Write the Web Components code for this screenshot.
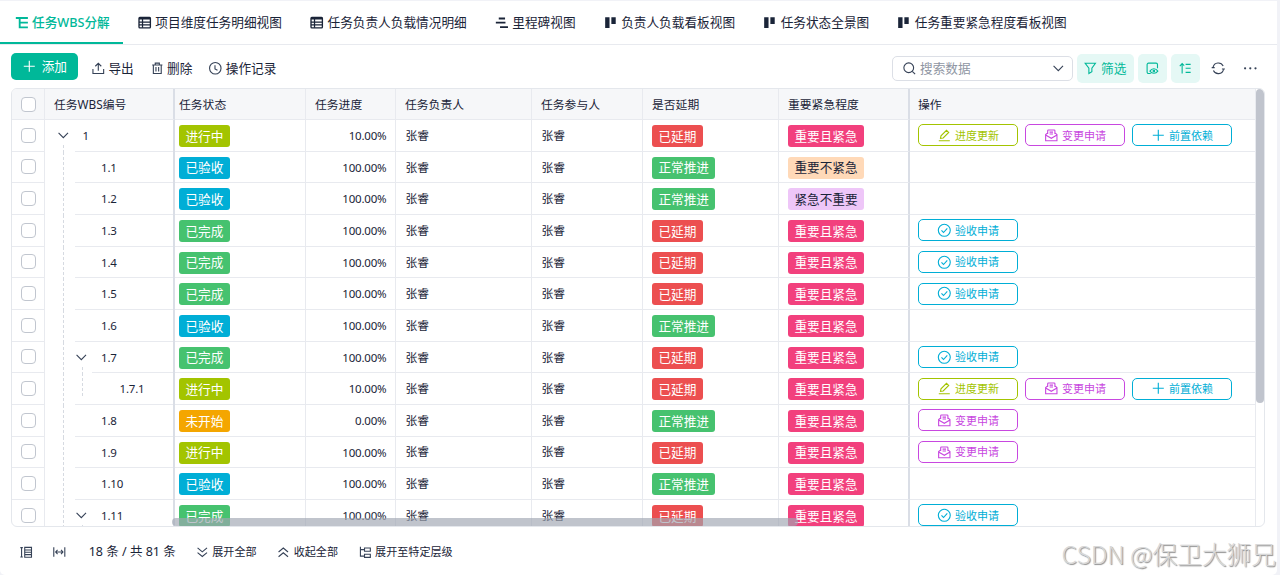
<!DOCTYPE html>
<html lang="zh-CN">
<head>
<meta charset="utf-8">
<title>任务WBS分解</title>
<style>
    html, body {
        margin: 0;
        height: 100%;
        overflow: hidden;
    }
    body {
        background: #f1f2f7;
        color: #1a2438;
        font-family: 'Noto Sans', 'Noto Sans CJK SC', sans-serif;
        font-size: 12.67px;
        line-height: 1;
    }
</style>
</head>
<body>
<task-app></task-app>

<script>
// stroke icons on a 16x16 grid
const icons = {
    tree: '<path d="M1 2.4h14.4M5.6 2.4v11.2h9.8M5.6 8h9.8" stroke-width="2.2"/>',
    grid: '<rect x="1.2" y="1.8" width="13.6" height="12.4" rx="1" stroke-width="1.6"/><path d="M1.2 3h13.6" stroke-width="2.4"/><path d="M1.2 7.2h13.6M1.2 10.7h13.6M5.4 3v11" stroke-width="1.5"/>',
    gantt: '<path d="M4.5 3h7.5M1 8h7.5M7.5 8h5M6 13.2h9.5" stroke-width="2.2"/>',
    board: '<path d="M1.4 1.6h5.2v12.6H1.4zM8.8 1.6H14v8H8.8z" fill="currentColor" stroke="none"/>',
    plus: '<path d="M8 1v14M1 8h14"/>',
    upload: '<path d="M1.2 9v5.6h13.6V9M8 11V1.8M4.2 5.4 8 1.6l3.8 3.8"/>',
    trash: '<path d="M1.5 3.8h13M5.4 3.8V1.4h5.2v2.4M3 3.8v10.8h10V3.8M6.3 6.5v5.6M9.7 6.5v5.6"/>',
    clock: '<circle cx="8" cy="8" r="7.3"/><path d="M7.6 4v4.8l3.2 1.6"/>',
    search: '<circle cx="7.3" cy="7.3" r="6.2"/><path d="m11.8 11.8 3.6 3.6"/>',
    down: '<path d="m2 5 6 6 6-6"/>',
    filter: '<path d="M1.5 1.6h13L10 7.8v4.6l-3.8 2.2V7.8z"/>',
    view: '<path d="M6 14.6H3.2a1.8 1.8 0 0 1-1.8-1.8V3.2a1.8 1.8 0 0 1 1.8-1.8h9.6a1.8 1.8 0 0 1 1.8 1.8V8"/><path d="M5 11.6c2.4-4 7.6-4 10 0-2.4 3.6-7.6 3.6-10 0z"/><circle cx="10" cy="11.4" r="1"/>',
    sort: '<path d="M4 14.5V2M1 5.2 4 2l2.6 2.6M8.4 3h6.4M8.4 8h6.4M8.4 13.2h6.4"/>',
    refresh: '<path d="M1.4 6.4A6.8 6.8 0 0 1 14.2 5.2M14.6 9.6A6.8 6.8 0 0 1 1.8 10.8M-.4 7.2h3.8M12.6 8.8h3.8"/>',
    more: '<g fill="currentColor" stroke="none"><circle cx="1.4" cy="8" r="1.4"/><circle cx="8" cy="8" r="1.4"/><circle cx="14.6" cy="8" r="1.4"/></g>',
    pen: '<path d="M1 15h14M3.2 12l.6-3.4 7-7 2.8 2.8-7 7z"/>',
    mail: '<path d="M3.4 6.2V2.2a1 1 0 0 1 1-1h7.2a1 1 0 0 1 1 1v4M5.8 4h4.4M5.8 6.4h4.4M3.4 5 .8 7v8h14.4V7l-2.6-2M.8 7.6l7.2 4.2 7.2-4.2"/>',
    check: '<circle cx="8" cy="8" r="7.6"/><path d="m4.4 8.2 2.6 2.6 4.8-5.2"/>',
    rows: '<path d="M.4 2h3.2M.4 14h3.2M2 2v12M6 1.8h8.6v12.4H6zM6 5h8.6M6 8h8.6M6 11h8.6"/>',
    fit: '<path d="M1 1.6v12M15 1.6v12M3.4 7.6h9.2M5.8 5 3.4 7.6l2.4 2.6M10.2 5l2.4 2.6-2.4 2.6"/>',
    expand: '<path d="m2 2.4 6 5 6-5M2 8.4l6 5 6-5"/>',
    collapse: '<path d="m2 7.6 6-5 6 5M2 13.6l6-5 6 5"/>',
    level: '<path d="M1.8 1v11.8h5M1.8 4.6h5M7 2.6h7.4v4H7zM7 10.4h7.4v4H7z"/>',
};

const sheet = `
<style>
    * { box-sizing: border-box; }
</style>
`;

class UiIcon extends HTMLElement {
    connectedCallback() {
        const root = this.attachShadow({ mode: 'open' });
        root.innerHTML = `
            <style>
                :host { display: inline-block; flex: none; width: 12.6px; height: 12.6px; }
                svg { display: block; width: 100%; height: 100%; overflow: visible; }
            </style>
            <svg viewBox="0 0 16 16" fill="none" stroke="currentColor" stroke-width="1.4">${icons[this.getAttribute('name')]}</svg>
        `;
    }
}

class ViewTab extends HTMLElement {
    connectedCallback() {
        const root = this.attachShadow({ mode: 'open' });
        root.innerHTML = `${sheet}
            <style>
                :host {
                    display: flex;
                    align-items: center;
                    gap: 4.1px;
                    height: 43px;
                    padding: 2px 13.6px 0 14.5px;
                    box-sizing: border-box;
                    white-space: nowrap;
                    border-bottom: 2px solid transparent;
                }
                :host([active]) { color: #00b899; border-color: #00b899; font-weight: 500; }
                ui-icon { width: 13.4px; height: 13.4px; }
            </style>
            <ui-icon name="${this.getAttribute('icon')}"></ui-icon><slot></slot>
        `;
    }
}

class ToolButton extends HTMLElement {
    connectedCallback() {
        const root = this.attachShadow({ mode: 'open' });
        root.innerHTML = `${sheet}
            <style>
                :host {
                    display: flex;
                    align-items: center;
                    justify-content: center;
                    gap: 4px;
                    box-sizing: border-box;
                    white-space: nowrap;
                }
                :host([kind=primary]) {
                    width: 67px;
                    height: 27px;
                    gap: 6px;
                    padding-left: 1px;
                    border-radius: 5px;
                    background: #00b899;
                    color: #fff;
                }
                :host([kind=soft]) {
                    min-width: 29px;
                    height: 29px;
                    padding: 0 7.5px;
                    border-radius: 5px;
                    background: #e5f8f5;
                    color: #00b899;
                }
                :host(:not([kind])) ui-icon { color: #364257; }
            </style>
            <ui-icon name="${this.getAttribute('icon')}"></ui-icon><slot></slot>
        `;
    }
}

class SearchBox extends HTMLElement {
    connectedCallback() {
        const root = this.attachShadow({ mode: 'open' });
        root.innerHTML = `
            <style>
                :host {
                    display: flex;
                    align-items: center;
                    box-sizing: border-box;
                    width: 181px;
                    height: 25px;
                    padding: 0 7px 0 10px;
                    border: 1px solid #dcdfe6;
                    border-radius: 5px;
                    color: #364257;
                }
                span { flex: 1; margin: 1px 0 0 4.5px; color: #8f96a3; }
            </style>
            <ui-icon name="search"></ui-icon><span><slot></slot></span><ui-icon name="down"></ui-icon>
        `;
    }
}

class StatusTag extends HTMLElement {
    connectedCallback() {
        const root = this.attachShadow({ mode: 'open' });
        root.innerHTML = `
            <style>
                :host {
                    display: flex;
                    align-items: center;
                    box-sizing: border-box;
                    height: 22px;
                    margin-top: 1.6px;
                    padding: 0 6.4px;
                    border-radius: 3px;
                    font-size: 12.67px;
                    color: #fff;
                    white-space: nowrap;
                }
                :host([tone=lime]) { background: #a3c400; }
                :host([tone=cyan]) { background: #00aed6; }
                :host([tone=green]) { background: #46c26f; }
                :host([tone=orange]) { background: #f4a600; }
                :host([tone=red]) { background: #ec4f50; }
                :host([tone=pink]) { background: #f2407d; }
                :host([tone=peach]) { background: #ffd9b8; color: #1a2438; }
                :host([tone=lilac]) { background: #eec6f8; color: #1a2438; }
            </style>
            <slot></slot>
        `;
    }
}

class RowAction extends HTMLElement {
    connectedCallback() {
        const root = this.attachShadow({ mode: 'open' });
        root.innerHTML = `
            <style>
                :host {
                    display: flex;
                    align-items: center;
                    justify-content: center;
                    gap: 4.5px;
                    box-sizing: border-box;
                    width: 100px;
                    height: 22px;
                    padding-left: 1px;
                    border: 1px solid;
                    border-radius: 5px;
                    font-size: 11px;
                }
            </style>
            <ui-icon name="${this.getAttribute('icon')}"></ui-icon><slot></slot>
        `;
    }
}

class CheckBox extends HTMLElement {
    connectedCallback() {
        const root = this.attachShadow({ mode: 'open' });
        root.innerHTML = `
            <style>
                :host {
                    display: block;
                    box-sizing: border-box;
                    width: 15px;
                    height: 15px;
                    border: 1px solid #c1c6cf;
                    border-radius: 4px;
                    background: #fff;
                }
            </style>
        `;
    }
}

// column widths shared by the header and the rows
const cells = `
<style>
    :host {
        display: grid;
        grid-template-columns: 33px 130px 131px 90px 136px 111px 136px 131px 346px;
        flex: none;
        font-size: 11.8px;
    }
    .cell {
        display: flex;
        align-items: center;
        min-width: 0;
        padding: 0 9px;
        border-right: 1px solid #e8eaef;
        border-bottom: 1px solid #e8eaef;
        white-space: nowrap;
    }
    .check { justify-content: center; padding: 0; }
    .wbs, .urgency { border-right: 2px solid #dadee6; }
    .status { padding-left: 4px; }
    .ops { gap: 7px; padding-left: 8px; }
</style>
`;

class TableHead extends HTMLElement {
    connectedCallback() {
        const root = this.attachShadow({ mode: 'open' });
        root.innerHTML = `${sheet}${cells}
            <style>
                :host { height: 31px; background: #f6f7f9; }
                .cell:not(.check) { padding-top: 1px; }
            </style>
            <div class="cell check"><check-box></check-box></div>
            <div class="cell wbs">任务WBS编号</div>
            <div class="cell status">任务状态</div>
            <div class="cell">任务进度</div>
            <div class="cell">任务负责人</div>
            <div class="cell">任务参与人</div>
            <div class="cell">是否延期</div>
            <div class="cell urgency">重要紧急程度</div>
            <div class="cell ops">操作</div>
        `;
    }
}

const tones = {
    进行中: 'lime',
    已验收: 'cyan',
    已完成: 'green',
    未开始: 'orange',
    已延期: 'red',
    正常推进: 'green',
    重要且紧急: 'pink',
    重要不紧急: 'peach',
    紧急不重要: 'lilac',
};

const actions = {
    进度更新: ['pen', '#a3c400'],
    变更申请: ['mail', '#c847e0'],
    前置依赖: ['plus', '#00aed6'],
    验收申请: ['check', '#00aed6'],
};

const tag = text => `<status-tag tone="${tones[text]}">${text}</status-tag>`;

const action = text => {
    const [icon, color] = actions[text];
    return `<row-action icon="${icon}" style="color: ${color}">${text}</row-action>`;
};

class TaskRow extends HTMLElement {
    connectedCallback() {
        const { wbs, status, progress, delay, urgency, ops, open, depth, nextDepth } = this.task;
        let guides = '';
        for(let i = 0; i < depth; i++) {
            guides += `<i class="guide ${i > 0 && nextDepth <= i ? 'last' : ''}"></i>`;
        }

        const root = this.attachShadow({ mode: 'open' });
        root.innerHTML = `${sheet}${cells}
            <style>
                :host { height: 31.67px; }
                .wbs {
                    border-bottom: 0;
                    background: linear-gradient(#e8eaef, #e8eaef) no-repeat right bottom / calc(100% - var(--inset)) 1px;
                }
                .guide, .toggle { flex: none; width: 18.5px; height: 100%; }
                .guide, .open {
                    background: repeating-linear-gradient(#d6dae1 0 3px, transparent 3px 5px) no-repeat 9px 0 / 1px 100%;
                }
                .last { background-size: 1px 24px; }
                .open { background-position: 9px 25px; }
                .toggle { display: flex; align-items: center; justify-content: center; color: #364257; }
                .toggle ui-icon { margin-top: -1px; }
                .num, .progress { font-size: 11.5px; letter-spacing: -0.2px; }
                .num { margin-left: 10px; }
                .progress { justify-content: flex-end; padding-right: 8.6px; }
                .progress, .name { padding-top: 1px; }
                .name { padding-left: 9.5px; }
            </style>
            <div class="cell check"><check-box></check-box></div>
            <div class="cell wbs" style="--inset: ${nextDepth > 1 ? 47 : 30}px">
                ${guides}<span class="toggle ${open ? 'open' : ''}">${open ? '<ui-icon name="down"></ui-icon>' : ''}</span>
                <span class="num">${wbs}</span>
            </div>
            <div class="cell status">${tag(status)}</div>
            <div class="cell progress">${progress}</div>
            <div class="cell name">张睿</div>
            <div class="cell name">张睿</div>
            <div class="cell">${tag(delay)}</div>
            <div class="cell urgency">${tag(urgency)}</div>
            <div class="cell ops">${ops.map(action).join('')}</div>
        `;
    }
}

const all = ['进度更新', '变更申请', '前置依赖'];
const tasks = [
    ['1', '进行中', '10.00%', '已延期', '重要且紧急', all, true],
    ['1.1', '已验收', '100.00%', '正常推进', '重要不紧急', []],
    ['1.2', '已验收', '100.00%', '正常推进', '紧急不重要', []],
    ['1.3', '已完成', '100.00%', '已延期', '重要且紧急', ['验收申请']],
    ['1.4', '已完成', '100.00%', '已延期', '重要且紧急', ['验收申请']],
    ['1.5', '已完成', '100.00%', '已延期', '重要且紧急', ['验收申请']],
    ['1.6', '已验收', '100.00%', '正常推进', '重要且紧急', []],
    ['1.7', '已完成', '100.00%', '已延期', '重要且紧急', ['验收申请'], true],
    ['1.7.1', '进行中', '10.00%', '已延期', '重要且紧急', all],
    ['1.8', '未开始', '0.00%', '正常推进', '重要且紧急', ['变更申请']],
    ['1.9', '进行中', '100.00%', '已延期', '重要且紧急', ['变更申请']],
    ['1.10', '已验收', '100.00%', '正常推进', '重要且紧急', []],
    ['1.11', '已完成', '100.00%', '已延期', '重要且紧急', ['验收申请'], true],
];

const depthOf = task => task ? task[0].split('.').length - 1 : 1;

class TaskTable extends HTMLElement {
    connectedCallback() {
        const root = this.attachShadow({ mode: 'open' });
        root.innerHTML = `${sheet}
            <style>
                :host {
                    position: relative;
                    display: flex;
                    box-sizing: border-box;
                    width: 1254px;
                    height: 439px;
                    border: 1px solid #e4e7ec;
                    border-radius: 6px;
                    overflow: hidden;
                }
                .rows { display: flex; flex-direction: column; flex: none; width: 1244px; }
                .vbar { flex: 1; }
                .vbar i { display: block; height: 314px; border-radius: 4px; background: #c0c4cd; }
                .hbar {
                    position: absolute;
                    left: 160px;
                    bottom: 0;
                    width: 626px;
                    height: 8px;
                    border-radius: 4px;
                    background: rgba(160, 165, 177, 0.66);
                }
            </style>
            <div class="rows"><table-head></table-head></div>
            <div class="vbar"><i></i></div>
            <div class="hbar"></div>
        `;

        const rows = root.querySelector('.rows');
        tasks.forEach((item, i) => {
            const [wbs, status, progress, delay, urgency, ops, open] = item;
            const row = document.createElement('task-row');
            row.task = {
                wbs, status, progress, delay, urgency, ops, open,
                depth: depthOf(item),
                nextDepth: depthOf(tasks[i + 1]),
            };
            rows.appendChild(row);
        });
    }
}

class TableFooter extends HTMLElement {
    connectedCallback() {
        const root = this.attachShadow({ mode: 'open' });
        root.innerHTML = `${sheet}
            <style>
                :host {
                    display: flex;
                    align-items: center;
                    height: 48px;
                    padding: 2px 0 0 20px;
                    box-sizing: border-box;
                    white-space: nowrap;
                    font-size: 11.08px;
                }
                .fit { margin-left: 20.5px; }
                .count { width: 86.5px; margin: 0 20.5px 0 23px; font-size: 12.5px; }
                tool-button { margin-right: 20.5px; }
                ui-icon { color: #364257; }
            </style>
            <ui-icon name="rows"></ui-icon>
            <ui-icon name="fit" class="fit"></ui-icon>
            <span class="count">18 条 / 共 81 条</span>
            <tool-button icon="expand">展开全部</tool-button>
            <tool-button icon="collapse">收起全部</tool-button>
            <tool-button icon="level">展开至特定层级</tool-button>
        `;
    }
}

class TaskApp extends HTMLElement {
    connectedCallback() {
        const root = this.attachShadow({ mode: 'open' });
        root.innerHTML = `${sheet}
            <style>
                :host {
                    display: flex;
                    flex-direction: column;
                    box-sizing: border-box;
                    width: 1277px;
                    height: 574px;
                    margin-top: 1px;
                    background: #fff;
                    border-radius: 0 0 5px 5px;
                }
                nav { display: flex; height: 44px; border-bottom: 1px solid #e8eaef; }
                .tools { display: flex; align-items: center; height: 43px; padding: 3px 20px 0 11px; }
                .tools .act { margin-left: 16.8px; }
                .tools [kind=primary] { margin: -3px -3px 0 0; }
                search-box { margin-left: auto; }
                .tools [kind=soft] { margin-left: 4px; }
                .tools .refresh { margin-left: 12px; }
                .tools .more { margin-left: 20px; }
                task-table { margin-left: 11px; }
                .mark {
                    position: absolute;
                    right: 4px;
                    bottom: 9px;
                    font: 300 24.8px/1 'Noto Sans CJK SC', sans-serif;
                    letter-spacing: -0.1px;
                    color: #d8d8d8;
                    text-shadow: 1px 1px 1px #8e8e8e;
                    white-space: nowrap;
                }
            </style>
            <nav>
                <view-tab icon="tree" active>任务WBS分解</view-tab>
                <view-tab icon="grid">项目维度任务明细视图</view-tab>
                <view-tab icon="grid">任务负责人负载情况明细</view-tab>
                <view-tab icon="gantt">里程碑视图</view-tab>
                <view-tab icon="board">负责人负载看板视图</view-tab>
                <view-tab icon="board">任务状态全景图</view-tab>
                <view-tab icon="board">任务重要紧急程度看板视图</view-tab>
            </nav>
            <div class="tools">
                <tool-button kind="primary" icon="plus">添加</tool-button>
                <tool-button class="act" icon="upload">导出</tool-button>
                <tool-button class="act" icon="trash">删除</tool-button>
                <tool-button class="act" icon="clock">操作记录</tool-button>
                <search-box>搜索数据</search-box>
                <tool-button kind="soft" icon="filter">筛选</tool-button>
                <tool-button kind="soft" icon="view"></tool-button>
                <tool-button kind="soft" icon="sort"></tool-button>
                <tool-button class="refresh" icon="refresh"></tool-button>
                <tool-button class="more" icon="more"></tool-button>
            </div>
            <task-table></task-table>
            <table-footer></table-footer>
            <div class="mark">CSDN @保卫大狮兄</div>
        `;
    }
}

customElements.define('ui-icon', UiIcon);
customElements.define('view-tab', ViewTab);
customElements.define('tool-button', ToolButton);
customElements.define('search-box', SearchBox);
customElements.define('status-tag', StatusTag);
customElements.define('row-action', RowAction);
customElements.define('check-box', CheckBox);
customElements.define('table-head', TableHead);
customElements.define('task-row', TaskRow);
customElements.define('task-table', TaskTable);
customElements.define('table-footer', TableFooter);
customElements.define('task-app', TaskApp);
</script>
</body>
</html>
